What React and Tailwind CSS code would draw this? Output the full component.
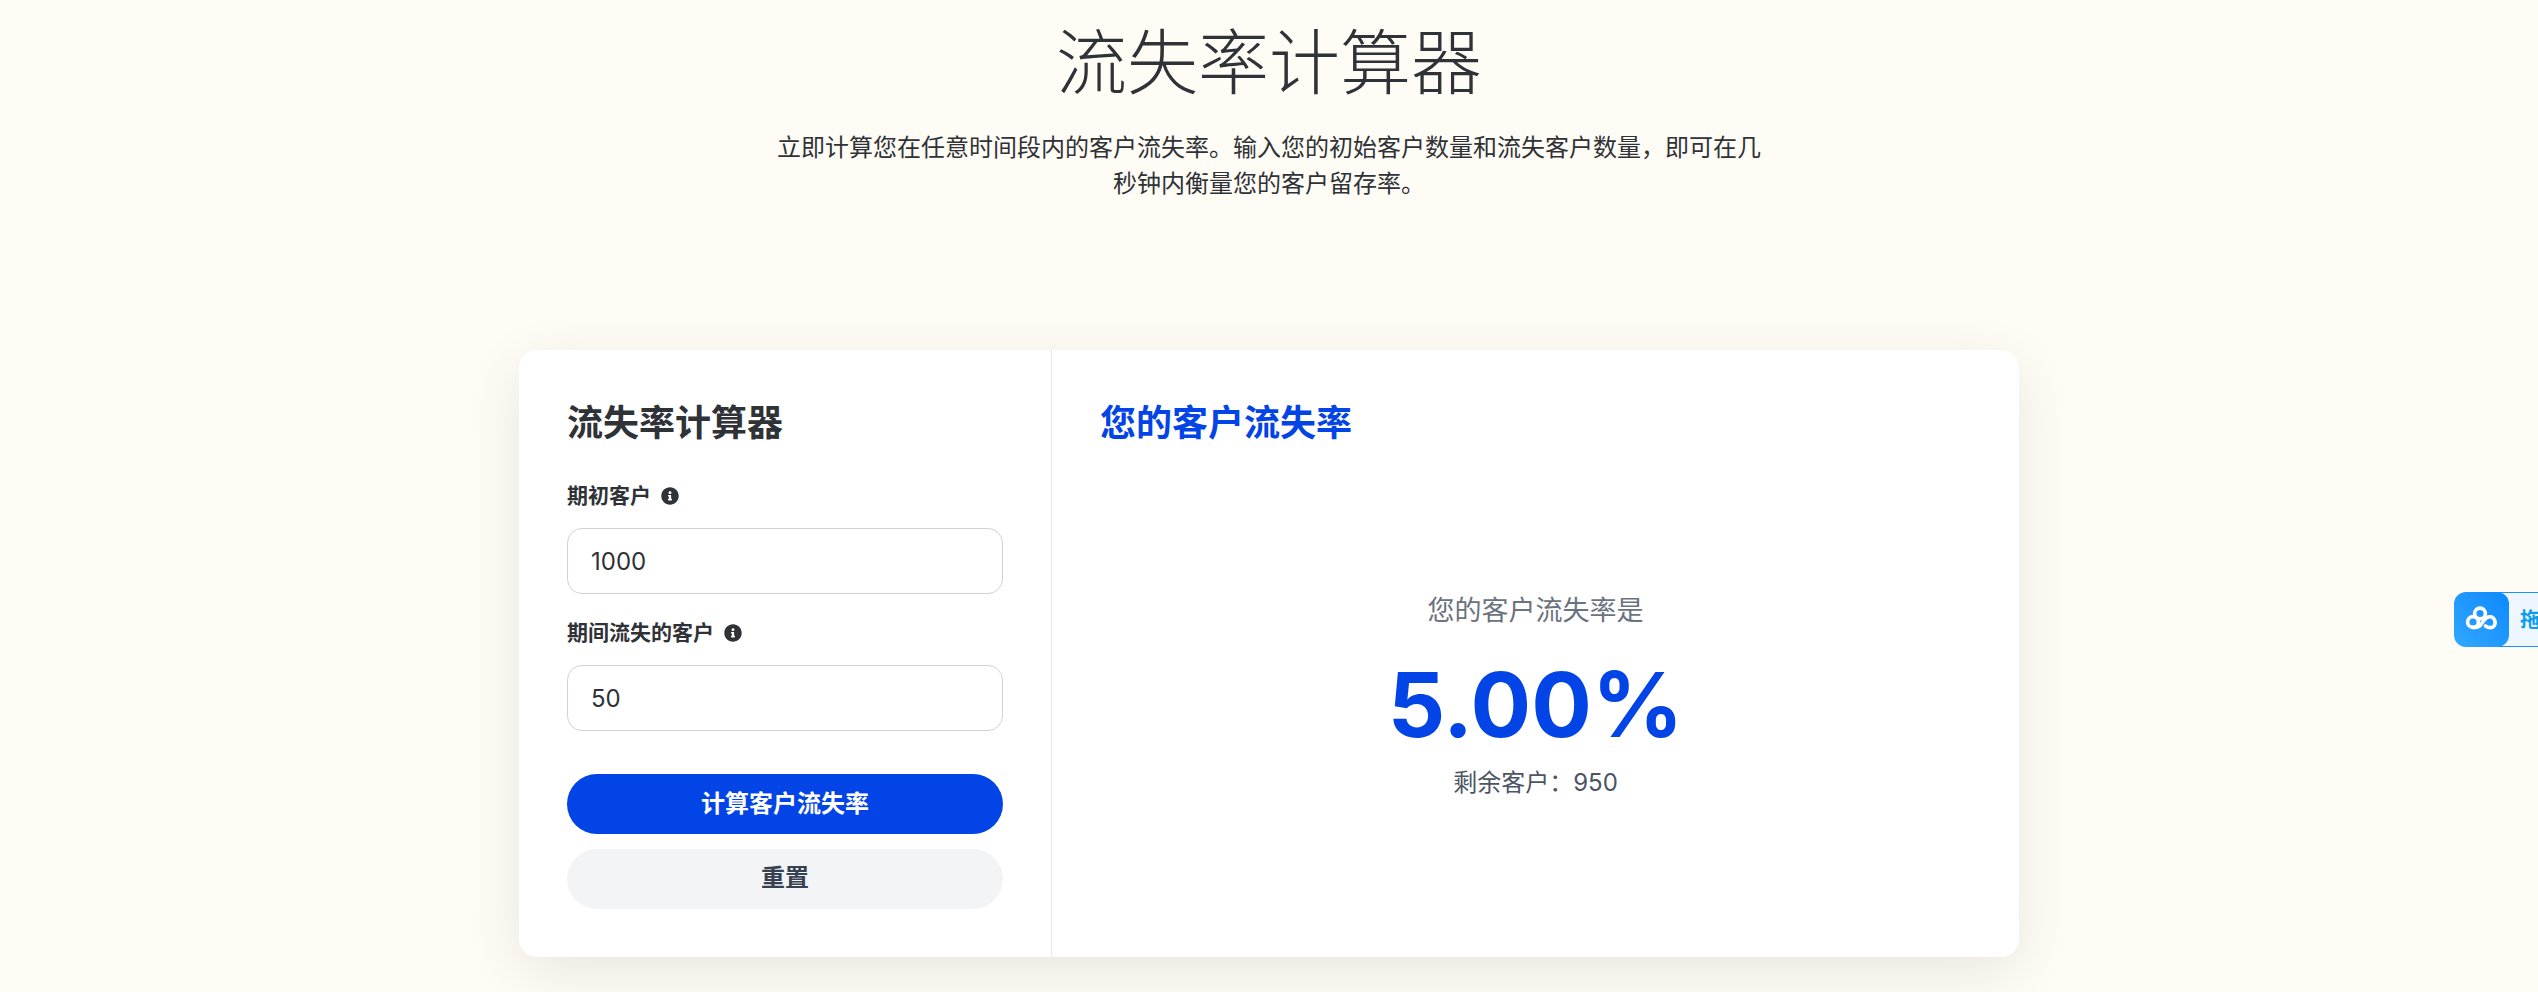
import React from "react";
import { FaInfoCircle } from "react-icons/fa";

function Field({ label, value }) {
  return (
    <div>
      <div className="flex items-center gap-[10px] h-[30px] text-[21px] leading-[30px] font-bold text-[#2f3237]">
        <span>{label}</span>
        <FaInfoCircle className="w-[18px] h-[18px] text-[#2f3237]" />
      </div>
      <input
        readOnly
        value={value}
        className="mt-[17px] block w-full h-[66px] rounded-[15px] border border-[#cfd2db] bg-white px-[23px] text-[24px] text-[#2f3237] outline-none"
      />
    </div>
  );
}

export default function App() {
  return (
    <div className="relative h-[992px] overflow-hidden bg-[#fffcf5] font-[family-name:Inter,'Noto_Sans_CJK_SC',sans-serif] text-[#2f3237]">
      <header className="flex flex-col items-center pt-[28px]">
        <h1 className="text-[71px] leading-[72px] font-light font-[family-name:'Liberation_Serif','Noto_Sans_CJK_SC',serif]">流失率计算器</h1>
        <p className="mt-[30px] max-w-[1000px] text-center text-[24px] leading-[36px]">
          {"立即计算您在任意时间段内的客户流失率。输入您的初始客户数量和流失客户数量\uFF0C即可在几秒钟内衡量您的客户留存率。"}
        </p>
      </header>

      <main className="mx-auto mt-[148px] flex h-[607px] w-[1500px] rounded-[18px] bg-white shadow-[0_15px_60px_rgba(0,0,0,0.09)]">
        <section className="w-[533px] shrink-0 border-r border-[#e5e7eb] p-12">
          <h2 className="pt-[3px] text-[36px] leading-[45px] font-bold">流失率计算器</h2>
          <div className="mt-[35px] flex flex-col gap-6">
            <Field label="期初客户" value="1000" />
            <Field label="期间流失的客户" value="50" />
          </div>
          <button className="mt-[43px] block h-[60px] w-full rounded-full bg-[#0344e6] text-[24px] font-bold text-white">计算客户流失率</button>
          <button className="mt-[15px] block h-[60px] w-full rounded-full bg-[#f3f4f6] pb-[2px] text-[24px] font-bold text-[#374151]">重置</button>
        </section>
        <section className="flex-1 p-12">
          <h2 className="pt-[3px] text-[36px] leading-[45px] font-bold text-[#0344e6]">您的客户流失率</h2>
          <div className="mt-[147px] flex flex-col items-center">
            <p className="text-[27px] leading-[36px] text-[#6b7280]">您的客户流失率是</p>
            <p className="mt-[31px] text-[90px] leading-[90px] font-bold text-[#0344e6]">5.00%</p>
            <p className="mt-[15px] text-[24px] leading-[36px] text-[#4b5563]">{"剩余客户\uFF1A950"}</p>
          </div>
        </section>
      </main>

      <div className="absolute left-[2454px] top-[592px] flex h-[55px] w-[120px] items-stretch">
        <div className="z-10 h-[55px] w-[55px] rounded-[12px] bg-gradient-to-tr from-[#32a8ff] to-[#0888ff]">
          <svg width="55" height="55" viewBox="0 0 55 55" fill="none" stroke="white" strokeWidth="3.6" strokeLinecap="round">
            <circle cx="26" cy="21.5" r="5.4" />
            <circle cx="19" cy="30" r="5.4" />
            <path d="M31.5 34 C33.5 36 38 36.5 40.2 33.8 C42.5 30.5 40.2 24.7 36 24.7 C33.5 24.7 31.5 26 30 28.2 L27 32.5 C25.5 34.8 22 36 19 35.4" />
          </svg>
        </div>
        <div className="-ml-3 flex flex-1 items-center border-y border-[#1a90ff] bg-[#eef7ff] pl-[23px] text-[20px] font-bold text-[#0b9df0]">拖</div>
      </div>
    </div>
  );
}
